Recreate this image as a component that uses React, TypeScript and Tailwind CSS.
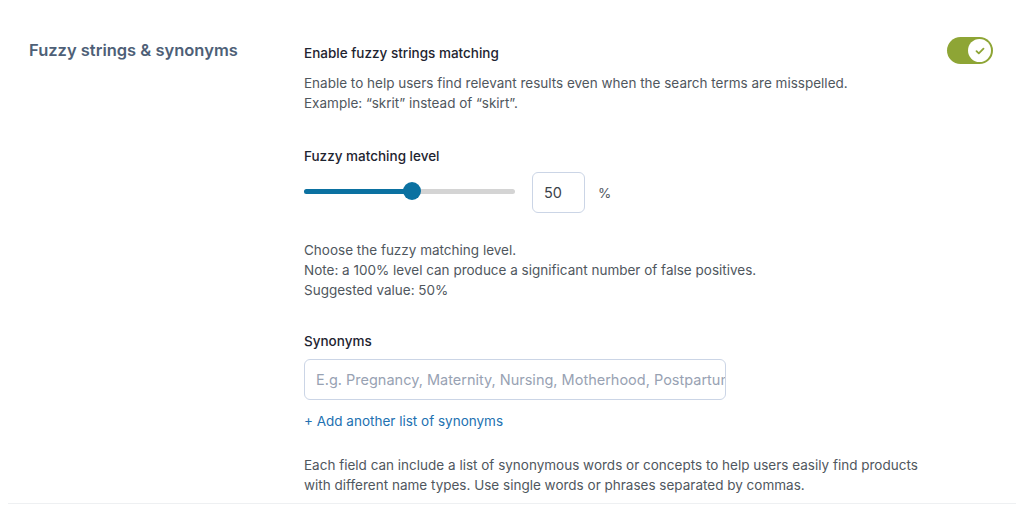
import React from "react";

export default function App() {
  return (
    <div className="w-[1024px] h-[512px] bg-white overflow-hidden" style={{ fontFamily: "Inter, 'Noto Sans', sans-serif" }}>
      <div className="mx-[8px] h-[504px] bg-white border-b border-[#eef0f2] flex">
        <div className="w-[296px] pl-[21px] pt-[38px]">
          <h2 className="text-[16.5px] leading-[24px] font-semibold text-[#4e5f77]">Fuzzy strings &amp; synonyms</h2>
        </div>
        <div className="flex-1 pt-[44px] pr-[23px] text-[13.5px] leading-[20px] text-[#50575e]">
          <div className="flex items-start justify-between">
            <div className="font-medium text-[#1e2430] leading-[18px]">Enable fuzzy strings matching</div>
            <div className="-mt-[7px] w-[46px] h-[27px] rounded-full bg-[#8ea535] flex items-center justify-end pr-[2px]">
              <div className="w-[23px] h-[23px] rounded-full bg-white flex items-center justify-center">
                <svg width="10" height="8" viewBox="0 0 10 8" fill="none">
                  <path d="M1.5 4.2 L3.8 6.4 L8.5 1.6" stroke="#8ea535" strokeWidth="1.8" strokeLinecap="round" strokeLinejoin="round" />
                </svg>
              </div>
            </div>
          </div>
          <p className="mt-[9px]">Enable to help users find relevant results even when the search terms are misspelled.</p>
          <p>Example: “skrit” instead of “skirt”.</p>

          <div className="mt-[34px] font-medium text-[#1e2430] leading-[18px]">Fuzzy matching level</div>
          <div className="mt-[7px] flex items-center">
            <div className="relative w-[211px] h-[5px] -mt-[3px] rounded-full bg-[#d4d4d4]">
              <div className="absolute left-0 top-0 h-[5px] w-[108px] rounded-full bg-[#0b71a1]" />
              <div className="absolute left-[99px] top-[-6.5px] w-[18px] h-[18px] rounded-full bg-[#0b71a1]" />
            </div>
            <div className="ml-[17px] w-[53px] h-[41px] rounded-[6px] border border-[#cbd5e6] flex items-center pl-[11px] text-[14.5px] text-[#3c434a]">50</div>
            <span className="ml-[13px] text-[#50575e]">%</span>
          </div>

          <p className="mt-[27px]">Choose the fuzzy matching level.</p>
          <p>Note: a 100% level can produce a significant number of false positives.</p>
          <p>Suggested value: 50%</p>

          <div className="mt-[32px] font-medium text-[#1e2430] leading-[18px]">Synonyms</div>
          <div className="mt-[9px] w-[422px] h-[41px] rounded-[6px] border border-[#cbd5e6] flex items-center pl-[11px] overflow-hidden whitespace-nowrap text-[14.5px] text-[#98a2b3]">
            E.g. Pregnancy, Maternity, Nursing, Motherhood, Postpartum
          </div>
          <div className="mt-[11px] text-[#2271b1]">+ Add another list of synonyms</div>

          <p className="mt-[24px]">Each field can include a list of synonymous words or concepts to help users easily find products</p>
          <p>with different name types. Use single words or phrases separated by commas.</p>
        </div>
      </div>
    </div>
  );
}
